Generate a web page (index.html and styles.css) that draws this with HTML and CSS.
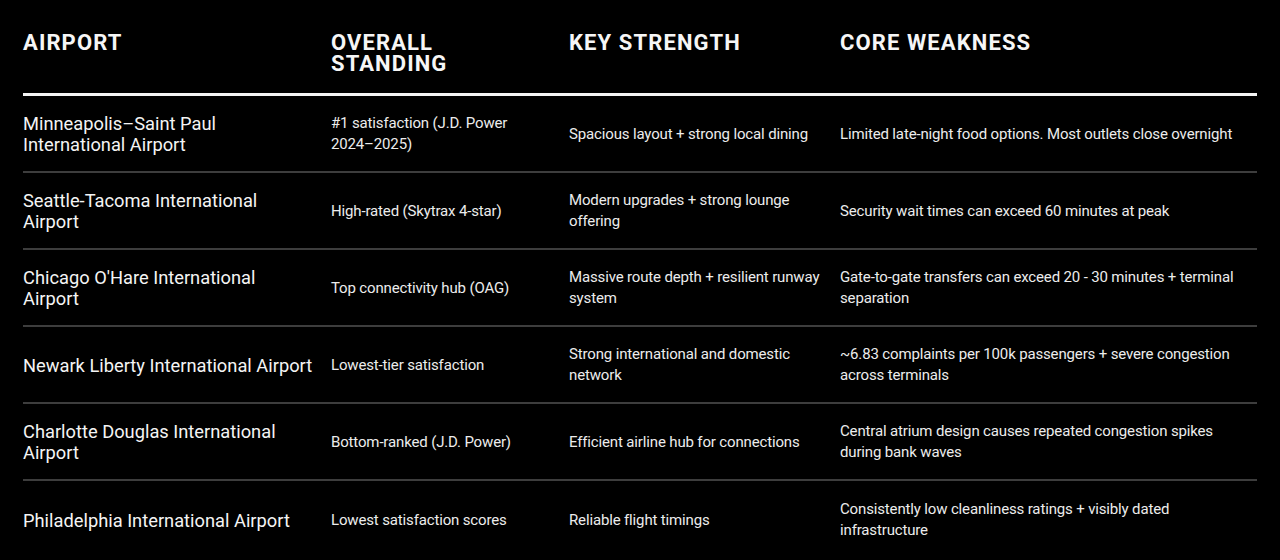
FILE: index.html
```html
<!DOCTYPE html>
<html lang="en">
<head>
<meta charset="utf-8">
<title>Airport comparison</title>
<link rel="stylesheet" href="styles.css">
</head>
<body>
<main class="page">
  <div class="table">
    <div class="row head">
      <div class="cell">AIRPORT</div>
      <div class="cell">OVERALL<br>STANDING</div>
      <div class="cell">KEY STRENGTH</div>
      <div class="cell">CORE WEAKNESS</div>
    </div>
    <div class="row">
      <div class="cell name">Minneapolis–Saint Paul<br>International Airport</div>
      <div class="cell">#1 satisfaction (J.D. Power<br>2024–2025)</div>
      <div class="cell">Spacious layout + strong local dining</div>
      <div class="cell">Limited late-night food options. Most outlets close overnight</div>
    </div>
    <div class="row">
      <div class="cell name">Seattle-Tacoma International<br>Airport</div>
      <div class="cell">High-rated (Skytrax 4-star)</div>
      <div class="cell">Modern upgrades + strong lounge offering</div>
      <div class="cell">Security wait times can exceed 60 minutes at peak</div>
    </div>
    <div class="row">
      <div class="cell name">Chicago O'Hare International<br>Airport</div>
      <div class="cell">Top connectivity hub (OAG)</div>
      <div class="cell">Massive route depth + resilient runway<br>system</div>
      <div class="cell">Gate-to-gate transfers can exceed 20 - 30 minutes + terminal<br>separation</div>
    </div>
    <div class="row">
      <div class="cell name">Newark Liberty International Airport</div>
      <div class="cell">Lowest-tier satisfaction</div>
      <div class="cell">Strong international and domestic<br>network</div>
      <div class="cell">~6.83 complaints per 100k passengers + severe congestion<br>across terminals</div>
    </div>
    <div class="row">
      <div class="cell name">Charlotte Douglas International<br>Airport</div>
      <div class="cell">Bottom-ranked (J.D. Power)</div>
      <div class="cell">Efficient airline hub for connections</div>
      <div class="cell">Central atrium design causes repeated congestion spikes<br>during bank waves</div>
    </div>
    <div class="row last">
      <div class="cell name">Philadelphia International Airport</div>
      <div class="cell">Lowest satisfaction scores</div>
      <div class="cell">Reliable flight timings</div>
      <div class="cell">Consistently low cleanliness ratings + visibly dated<br>infrastructure</div>
    </div>
  </div>
</main>
</body>
</html>
```
FILE: styles.css
```css
* { box-sizing: border-box; }
html, body {
  margin: 0;
  background: #000;
}
body {
  font-family: Roboto, "Liberation Sans", sans-serif;
  color: #ececec;
}
.page {
  padding: 31px 23px 0 23px;
  height: 560px;
  overflow: hidden;
}
.table {
  display: flex;
  flex-direction: column;
}
.row {
  display: grid;
  grid-template-columns: 308px 238px 271px 1fr;
  align-items: center;
  padding: 17px 0 16px;
  border-bottom: 2px solid #3d3d3d;
  font-size: 15px;
  line-height: 21px;
  letter-spacing: -0.15px;
  min-height: 77px;
}
.row.head {
  align-items: start;
  padding: 1px 0 19px;
  border-bottom: 3px solid #f4f4f4;
  font-size: 22px;
  font-weight: 700;
  line-height: 21px;
  letter-spacing: 1.1px;
  color: #f6f6f6;
  min-height: 0;
}
.row.last { border-bottom: none; }
.cell { padding-right: 6px; }
.cell.name {
  font-size: 18.3px;
  letter-spacing: 0;
  color: #f4f4f4;
}
```
